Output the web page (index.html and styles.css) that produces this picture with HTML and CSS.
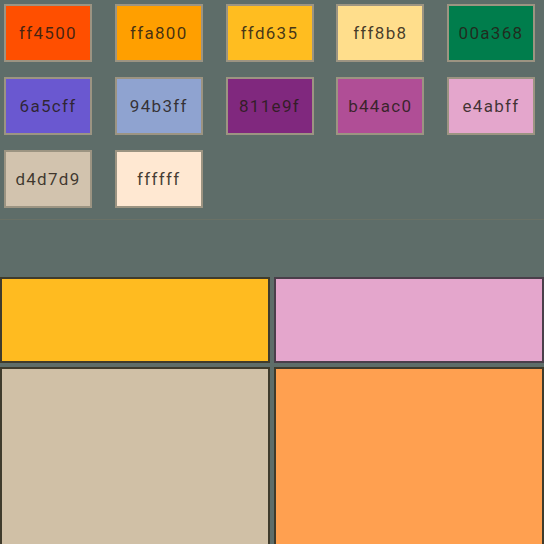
FILE: index.html
```html
<!DOCTYPE html>
<html>
<head>
<meta charset="utf-8">
<link rel="stylesheet" href="styles.css">
</head>
<body>
<div class="page">
  <div class="swatches">
    <div class="swatch c1">ff4500</div>
    <div class="swatch c2">ffa800</div>
    <div class="swatch c3">ffd635</div>
    <div class="swatch c4">fff8b8</div>
    <div class="swatch c5">00a368</div>
    <div class="swatch c6">6a5cff</div>
    <div class="swatch c7">94b3ff</div>
    <div class="swatch c8">811e9f</div>
    <div class="swatch c9">b44ac0</div>
    <div class="swatch c10">e4abff</div>
    <div class="swatch c11">d4d7d9</div>
    <div class="swatch c12">ffffff</div>
  </div>
  <div class="divider"></div>
  <div class="panels">
    <div class="panel p1"></div>
    <div class="panel p2"></div>
    <div class="panel p3"></div>
    <div class="panel p4"></div>
  </div>
</div>
</body>
</html>
```
FILE: styles.css
```css
html, body {
  margin: 0;
  padding: 0;
  background: #5e6d69;
  overflow: hidden;
  width: 544px;
  height: 544px;
}
.page {
  display: flex;
  flex-direction: column;
}
.swatches {
  display: grid;
  grid-template-columns: repeat(5, 88px);
  grid-auto-rows: 58px;
  column-gap: 22.75px;
  row-gap: 15px;
  padding: 4px 4px 11px 4px;
}
.swatch {
  box-sizing: border-box;
  border: 2px solid #9c9482;
  display: flex;
  align-items: center;
  justify-content: center;
  font-family: Roboto, "Noto Sans", sans-serif;
  font-size: 17px;
  letter-spacing: 1.3px;
  color: rgba(38, 28, 22, 0.85);
}
.c1 { background: #ff4f00; }
.c2 { background: #ff9f00; }
.c3 { background: #ffbd20; }
.c4 { background: #ffde8c; }
.c5 { background: #007d4c; }
.c6 { background: #6a58d0; }
.c7 { background: #8fa3d0; }
.c8 { background: #80287e; }
.c9 { background: #b04e96; }
.c10 { background: #e4a6cc; }
.c11 { background: #d2c3ae; }
.c12 { background: #ffe8d2; }
.divider {
  height: 1px;
  background: #6a7166;
  margin-bottom: 57px;
}
.panels {
  display: grid;
  grid-template-columns: 270px 270px;
  grid-template-rows: 86px 180px;
  gap: 4px;
}
.panel {
  box-sizing: border-box;
  border: 2px solid #3f3b2c;
}
.p1 { background: #ffbb20; }
.p2 { background: #e4a6cc; border-color: #4a3f4a; }
.p3 { background: #d0c0a6; }
.p4 { background: #ffa050; }
```
